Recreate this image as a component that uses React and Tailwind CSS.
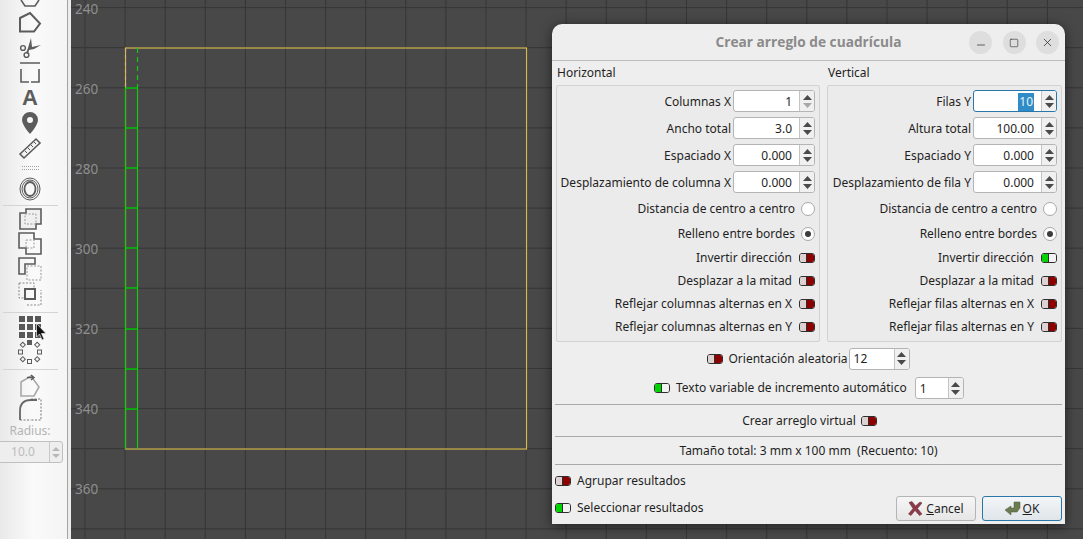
import { Minus, Square, X } from 'lucide-react';

const Arrows = ({ downOff }) => (
  <div className="flex w-[15px] flex-col items-center justify-center gap-[3px] border-l border-[#c4c4c4] bg-[#f0f0f0]">
    <svg width="9" height="5" viewBox="0 0 9 5"><path d="M4.5 0L9 5H0z" fill="#4a4a4a" /></svg>
    <svg width="9" height="5" viewBox="0 0 9 5"><path d="M0 0h9L4.5 5z" fill={downOff ? '#a8a8a8' : '#4a4a4a'} /></svg>
  </div>
);

const Spin = ({ value, w = 'w-[82px]', downOff, focus, left }) => (
  <div className={`flex h-[22px] shrink-0 overflow-hidden rounded-[3px] border bg-white ${w} ${focus ? 'border-[#2a76a8]' : 'border-[#b4b4b4]'}`}>
    <div className={`flex flex-1 items-center pt-px text-[12px] text-[#1e1e1e] ${left ? 'justify-start pl-[4px]' : 'justify-end pr-[7px]'}`}>
      {focus ? <span className="bg-[#308cc6] px-px py-[3px] text-[#e8f2f8]">{value}</span> : value}
    </div>
    <Arrows downOff={downOff} />
  </div>
);

const Toggle = ({ on }) => (
  <div className="flex h-[10px] w-[16px] shrink-0 overflow-hidden rounded-[3px] border border-[#2e2e2e]">
    <div className={`w-[7px] border-r border-[#2e2e2e] ${on ? 'bg-[#00d400]' : 'bg-[#dcd2d2]'}`} />
    <div className={`flex-1 ${on ? 'bg-[#f2f2f2]' : 'bg-[#8c0000]'}`} />
  </div>
);

const Radio = ({ on }) => (
  <div className="flex h-[14px] w-[14px] shrink-0 items-center justify-center rounded-full border border-[#a8a8a8] bg-white">
    {on && <div className="h-[6px] w-[6px] rounded-full bg-[#3c3c3c]" />}
  </div>
);

const SpinRow = ({ label, ...rest }) => (
  <div className="flex h-[22px] items-center justify-end gap-[2px]">
    <span className="mt-px">{label}</span>
    <Spin {...rest} />
  </div>
);

const RadioRow = ({ label, on }) => (
  <div className="flex h-[25px] items-center justify-end gap-[6px]">
    <span>{label}</span>
    <Radio on={on} />
  </div>
);

const ToggleRow = ({ label, on }) => (
  <div className="flex h-[23px] items-center justify-end gap-[7px]">
    <span>{label}</span>
    <Toggle on={on} />
  </div>
);

const Panel = ({ title, width, spins, flip, toggles }) => (
  <div className={`flex flex-col ${width}`}>
    <div className="flex h-[24px] items-center pl-px">{title}</div>
    <div className="flex h-[257px] flex-col rounded-[2px] border border-[#d2d2d2] bg-[#ebebeb] pt-[4px] pr-[4px]">
      <div className="flex flex-col gap-[5px]">
        {spins.map((s) => <SpinRow key={s.label} {...s} />)}
      </div>
      <div className="mt-[3px] flex flex-col">
        <RadioRow label="Distancia de centro a centro" />
        <RadioRow label="Relleno entre bordes" on />
      </div>
      <ToggleRow label="Invertir dirección" on={flip} />
      {toggles.map((t) => <ToggleRow key={t} label={t} />)}
    </div>
  </div>
);

const Tool = ({ h = 'h-[25px]', children }) => (
  <div className={`flex shrink-0 items-center justify-center ${h}`}>{children}</div>
);

const Sep = ({ className }) => <div className={`mx-[3px] h-px w-[55px] shrink-0 bg-[#d4d4d4] ${className}`} />;

const ic = { fill: 'none', stroke: '#5c5c5c', strokeWidth: 1.6 };

const Toolbar = () => (
  <div className="flex h-full w-[68px] shrink-0 flex-col border-r border-[#a4a4a4] bg-gradient-to-r from-[#e9e9e9] via-[#fafafa] to-[#f4f4f4] pr-[7px]">
    <Tool h="h-[10px] items-start">
      <svg width="24" height="7" viewBox="0 0 24 7"><path d="M3 0l4 6h10l4-6" {...ic} /></svg>
    </Tool>
    <Tool>
      <svg width="24" height="24" viewBox="0 0 24 24"><path d="M2 7l10-5 10 10.500-6 8H2z" {...ic} strokeWidth="2" /></svg>
    </Tool>
    <Tool>
      <svg width="24" height="24" viewBox="0 0 24 24" fill="#5c5c5c">
        <path d="M13 2l1 9 9-2-7 4-5 1-1 4-2-1 2-5z" />
        <circle cx="5" cy="12" r="2.4" fill="none" stroke="#5c5c5c" strokeWidth="1.4" />
        <circle cx="8.5" cy="19" r="2.4" fill="none" stroke="#5c5c5c" strokeWidth="1.4" />
      </svg>
    </Tool>
    <Tool>
      <svg width="24" height="24" viewBox="0 0 24 24"><path d="M2 2h20M3 8v13h8M21 8v13h-8" {...ic} /></svg>
    </Tool>
    <Tool>
      <span className="font-['Liberation_Sans',sans-serif] text-[22px] leading-none font-bold text-[#5c5c5c]">A</span>
    </Tool>
    <Tool>
      <svg width="20" height="24" viewBox="0 0 20 24">
        <path fillRule="evenodd" fill="#5c5c5c" d="M10 1a8 8 0 0 1 8 8c0 5-8 14-8 14S2 14 2 9a8 8 0 0 1 8-8zm0 5a3 3 0 1 0 0 6 3 3 0 0 0 0-6z" />
      </svg>
    </Tool>
    <Tool>
      <svg width="24" height="24" viewBox="0 0 24 24">
        <path d="M2 18L18 3l4 4L6 22z" fill="#f2f2f2" stroke="#5c5c5c" strokeWidth="1.6" />
        <path d="M7 15l2 2M10 12l2 2M13 9l2 2M16 6l2 2" stroke="#5c5c5c" strokeWidth="1" />
      </svg>
    </Tool>
    <Tool h="h-[16px]">
      <div className="h-[4px] w-[17px] border-y border-dotted border-[#a0a0a0]" />
    </Tool>
    <Tool>
      <svg width="22" height="24" viewBox="0 0 22 24" fill="none" stroke="#5c5c5c">
        <ellipse cx="11" cy="12" rx="10" ry="11" strokeWidth="1" />
        <ellipse cx="11" cy="12" rx="8" ry="9" strokeWidth="1" />
        <ellipse cx="11" cy="12" rx="5.5" ry="7" strokeWidth="1.8" />
      </svg>
    </Tool>
    <Sep className="mt-[4px]" />
    <Tool>
      <svg width="24" height="24" viewBox="0 0 24 24" fill="none">
        <path d="M8 2h15v15h-5v5H2V6h6z" stroke="#5c5c5c" strokeWidth="1.6" fill="#efefef" />
        <path d="M7 7h11v10H7z" stroke="#999" strokeWidth="1" strokeDasharray="2 1.5" />
      </svg>
    </Tool>
    <Tool>
      <svg width="24" height="24" viewBox="0 0 24 24" fill="none">
        <path d="M1 1h15v6h7v15H8v-6H1z" stroke="#5c5c5c" strokeWidth="1.6" />
        <path d="M8 8h8v8H8z" stroke="#999" strokeWidth="1" strokeDasharray="2 1.5" />
      </svg>
    </Tool>
    <Tool>
      <svg width="24" height="24" viewBox="0 0 24 24" fill="none">
        <path d="M1 17V1h16v6H7v10z" stroke="#5c5c5c" strokeWidth="1.6" />
        <path d="M9 9h14v14H9z" stroke="#999" strokeWidth="1" strokeDasharray="2 1.5" />
      </svg>
    </Tool>
    <Tool>
      <svg width="24" height="24" viewBox="0 0 24 24" fill="none">
        <path d="M1 1h15v6M1 1v15h6M16 23h7V8M9 23h7" stroke="#888" strokeWidth="1" strokeDasharray="2 1.5" />
        <path d="M7 7h10v10H7z" stroke="#5c5c5c" strokeWidth="2" />
      </svg>
    </Tool>
    <Sep className="mt-[6px] mb-px" />
    <Tool>
      <div className="grid grid-cols-3 gap-[2px]">
        {[1, 2, 3, 4, 5, 6, 7, 8, 9].map((n) => <div key={n} className="h-[6px] w-[6px] bg-[#585858]" />)}
      </div>
    </Tool>
    <Tool>
      <svg width="24" height="24" viewBox="0 0 24 24" fill="#f4f4f4" stroke="#5c5c5c" strokeWidth="1">
        <rect x="9.5" y="0.5" width="4" height="4" fill="#5c5c5c" />
        <rect x="9.5" y="19.5" width="4" height="4" />
        <rect x="0.5" y="10" width="4" height="4" />
        <rect x="19.5" y="10" width="4" height="4" />
        <rect x="3" y="3" width="3.6" height="3.6" transform="rotate(45 4.8 4.8)" />
        <rect x="17.4" y="3" width="3.6" height="3.6" transform="rotate(45 19.2 4.8)" />
        <rect x="3" y="17.4" width="3.6" height="3.6" transform="rotate(45 4.8 19.2)" />
        <rect x="17.4" y="17.4" width="3.6" height="3.6" transform="rotate(45 19.2 19.2)" />
      </svg>
    </Tool>
    <Sep className="mt-[5px] mb-[3px]" />
    <Tool>
      <svg width="24" height="24" viewBox="0 0 24 24" fill="none">
        <path d="M3 8l10-6 8 11-5 9H3z" stroke="#a8a8a8" strokeWidth="1.6" />
        <path d="M9 3.5h7M13 1l3 2.5-3 2.5" stroke="#5c5c5c" strokeWidth="1.4" />
      </svg>
    </Tool>
    <Tool h="h-[23px]">
      <svg width="24" height="24" viewBox="0 0 24 24" fill="none">
        <path d="M13 1h10v21H13" stroke="#777" strokeWidth="1" strokeDasharray="2 1.5" />
        <path d="M2 22H13" stroke="#777" strokeWidth="1" strokeDasharray="2 1.5" />
        <path d="M2 22V13Q2 2 13 2h6" stroke="#666" strokeWidth="1.8" />
      </svg>
    </Tool>
    <div className="flex h-[20px] shrink-0 items-center justify-center text-[12px] text-[#b4b4b4]">Radius:</div>
    <div className="-ml-[4px] flex h-[22px] w-[67px] shrink-0 overflow-hidden rounded-[3px] border border-[#c0c0c0] bg-[#eeeeee]">
      <div className="flex flex-1 items-center justify-center text-[12px] text-[#bcbcbc]">10.0</div>
      <div className="flex w-[13px] flex-col items-center justify-center gap-[3px] border-l border-[#c8c8c8]">
        <svg width="8" height="4" viewBox="0 0 8 4"><path d="M4 0l4 4H0z" fill="#b8b8b8" /></svg>
        <svg width="8" height="4" viewBox="0 0 8 4"><path d="M0 0h8L4 4z" fill="#b8b8b8" /></svg>
      </div>
    </div>
  </div>
);

const xs = Array.from({ length: 25 }, (_, i) => 85 + i * 40.1);
const ys = Array.from({ length: 14 }, (_, i) => 7.6 + i * 40.1);
const cells = [88, 128, 168, 208, 248, 288, 329, 369, 409];
const labels = [[240, 14], [260, 94], [280, 174], [300, 254], [320, 334], [340, 414], [360, 494]];

const Canvas = () => (
  <svg className="absolute inset-0 h-full w-full" viewBox="71 0 1012 539">
    {xs.map((x) => <path key={x} d={`M${x} 0V539`} stroke="#363636" strokeWidth="1" />)}
    {ys.map((y) => <path key={y} d={`M71 ${y}H1083`} stroke="#363636" strokeWidth="1" />)}
    {labels.map(([t, y]) => (
      <text key={t} x="75" y={y} fontSize="13.5" fill="#8f8f8f" fontFamily="Noto Sans, sans-serif">{t}</text>
    ))}
    <rect x="125.5" y="48" width="401" height="401" fill="none" stroke="#d6b94e" strokeWidth="1.2" />
    <path d="M125.5 88V449M137.5 88V449" fill="none" stroke="#14c814" strokeWidth="1.2" />
    <path d="M137.5 48V88" stroke="#14c814" strokeWidth="1.2" strokeDasharray="5 4" />
    <path d="M125.5 48V88" stroke="#d8b080" strokeWidth="1.2" strokeDasharray="4 3" />
    {cells.map((y) => <path key={y} d={`M125 ${y}H138`} stroke="#00d000" strokeWidth="1.4" />)}
  </svg>
);

const WinButton = ({ children }) => (
  <div className="flex h-[23px] w-[23px] items-center justify-center rounded-full bg-[#dedede] text-[#333]">{children}</div>
);

const Dialog = () => (
  <div className="absolute top-[24px] left-[481px] flex h-[500px] w-[513px] flex-col rounded-t-[10px] bg-[#eeeeee] text-[12px] leading-none text-[#1f1f1f] shadow-[0_2px_12px_rgba(0,0,0,0.55)]">
    <div className="relative flex h-[37px] shrink-0 items-center justify-center border-b border-[#bcbcbc] text-[13.7px] font-bold text-[#8a8a8a]">
      <span className="font-['Open_Sans',sans-serif]">Crear arreglo de cuadrícula</span>
      <div className="absolute top-[7px] right-[6px] flex gap-[10.5px]">
        <WinButton><Minus size={12} strokeWidth={1.5} className="mt-[5px]" /></WinButton>
        <WinButton><Square size={10} strokeWidth={1.5} /></WinButton>
        <WinButton><X size={13} strokeWidth={1.5} /></WinButton>
      </div>
    </div>
    <div className="flex shrink-0 gap-[7px] pl-[4px]">
      <Panel
        title="Horizontal"
        width="w-[264px]"
        flip={false}
        spins={[
          { label: 'Columnas X', value: '1', downOff: true },
          { label: 'Ancho total', value: '3.0' },
          { label: 'Espaciado X', value: '0.000' },
          { label: 'Desplazamiento de columna X', value: '0.000' },
        ]}
        toggles={['Desplazar a la mitad', 'Reflejar columnas alternas en X', 'Reflejar columnas alternas en Y']}
      />
      <Panel
        title="Vertical"
        width="w-[235px]"
        flip
        spins={[
          { label: 'Filas Y', value: '10', focus: true, w: 'w-[84px]' },
          { label: 'Altura total', value: '100.00', w: 'w-[84px]' },
          { label: 'Espaciado Y', value: '0.000', w: 'w-[84px]' },
          { label: 'Desplazamiento de fila Y', value: '0.000', w: 'w-[84px]' },
        ]}
        toggles={['Desplazar a la mitad', 'Reflejar filas alternas en X', 'Reflejar filas alternas en Y']}
      />
    </div>
    <div className="mt-[6px] flex h-[21px] shrink-0 items-center justify-center">
      <Toggle />
      <span className="mr-px ml-[5px]">Orientación aleatoria</span>
      <Spin value="12" w="w-[61px]" left />
    </div>
    <div className="mt-[8px] flex h-[22px] shrink-0 items-center pl-[102px]">
      <Toggle on />
      <span className="mr-[8px] ml-[6px]">Texto variable de incremento automático</span>
      <Spin value="1" w="w-[49px]" left />
    </div>
    <div className="mx-[3px] mt-[5px] h-px shrink-0 bg-[#a8a8a8]" />
    <div className="flex h-[31px] shrink-0 items-center justify-center gap-[5px] pl-[2px]">
      <span>Crear arreglo virtual</span>
      <Toggle />
    </div>
    <div className="mx-[3px] h-px shrink-0 bg-[#a8a8a8]" />
    <div className="flex h-[27px] shrink-0 items-center justify-center whitespace-pre">Tamaño total: 3 mm x 100 mm  (Recuento: 10)</div>
    <div className="mx-[3px] h-px shrink-0 bg-[#a8a8a8]" />
    <div className="flex flex-1 items-start justify-between pr-[3px] pl-[3px]">
      <div className="flex flex-col">
        <div className="mt-[4px] flex h-[24px] items-center gap-[6px]"><Toggle /><span>Agrupar resultados</span></div>
        <div className="mt-[3px] flex h-[24px] items-center gap-[6px]"><Toggle on /><span>Seleccionar resultados</span></div>
      </div>
      <div className="mt-[31px] flex gap-[6px]">
        <button className="flex h-[25px] w-[80px] items-center justify-center gap-[3px] rounded-[3px] border border-[#b4b4b4] bg-gradient-to-b from-[#f6f6f6] to-[#e6e6e6]">
          <svg width="15" height="15" viewBox="0 0 15 15"><path d="M1 1.500l3-1 3.500 4.500L12 1l2 1-4.500 5.500L14 13l-2.500 1.500L7 9.500 3 14.500 0.500 13 5 7.500z" fill="#8e3a48" stroke="#5e2a34" strokeWidth="0.5" /></svg>
          <span><span className="underline">C</span>ancel</span>
        </button>
        <button className="flex h-[25px] w-[80px] items-center justify-center gap-[2px] rounded-[3px] border border-[#2a76a8] bg-gradient-to-b from-[#f4f6f8] to-[#dfe5ea]">
          <svg width="16" height="15" viewBox="0 0 16 15"><path d="M9 1h6v6l-3 4H6v3L0 9l6-4v2h3z" fill="#6c7c50" stroke="#4a5838" strokeWidth="0.5" /></svg>
          <span><span className="underline">O</span>K</span>
        </button>
      </div>
    </div>
  </div>
);

export default function App() {
  return (
    <div className="flex h-[539px] w-[1083px] overflow-hidden bg-[#484848] font-['Noto_Sans',sans-serif]">
      <Toolbar />
      <div className="w-[3px] shrink-0 bg-[#ececec]" />
      <div className="relative flex-1">
        <Canvas />
        <Dialog />
      </div>
      <svg className="absolute top-[323px] left-[36px]" width="11" height="18" viewBox="0 0 11 18">
        <path d="M0.500 0.500V14l3-3 2.500 6 2-1-2.500-5.500H10z" fill="#111" stroke="#eee" strokeWidth="0.7" />
      </svg>
    </div>
  );
}
